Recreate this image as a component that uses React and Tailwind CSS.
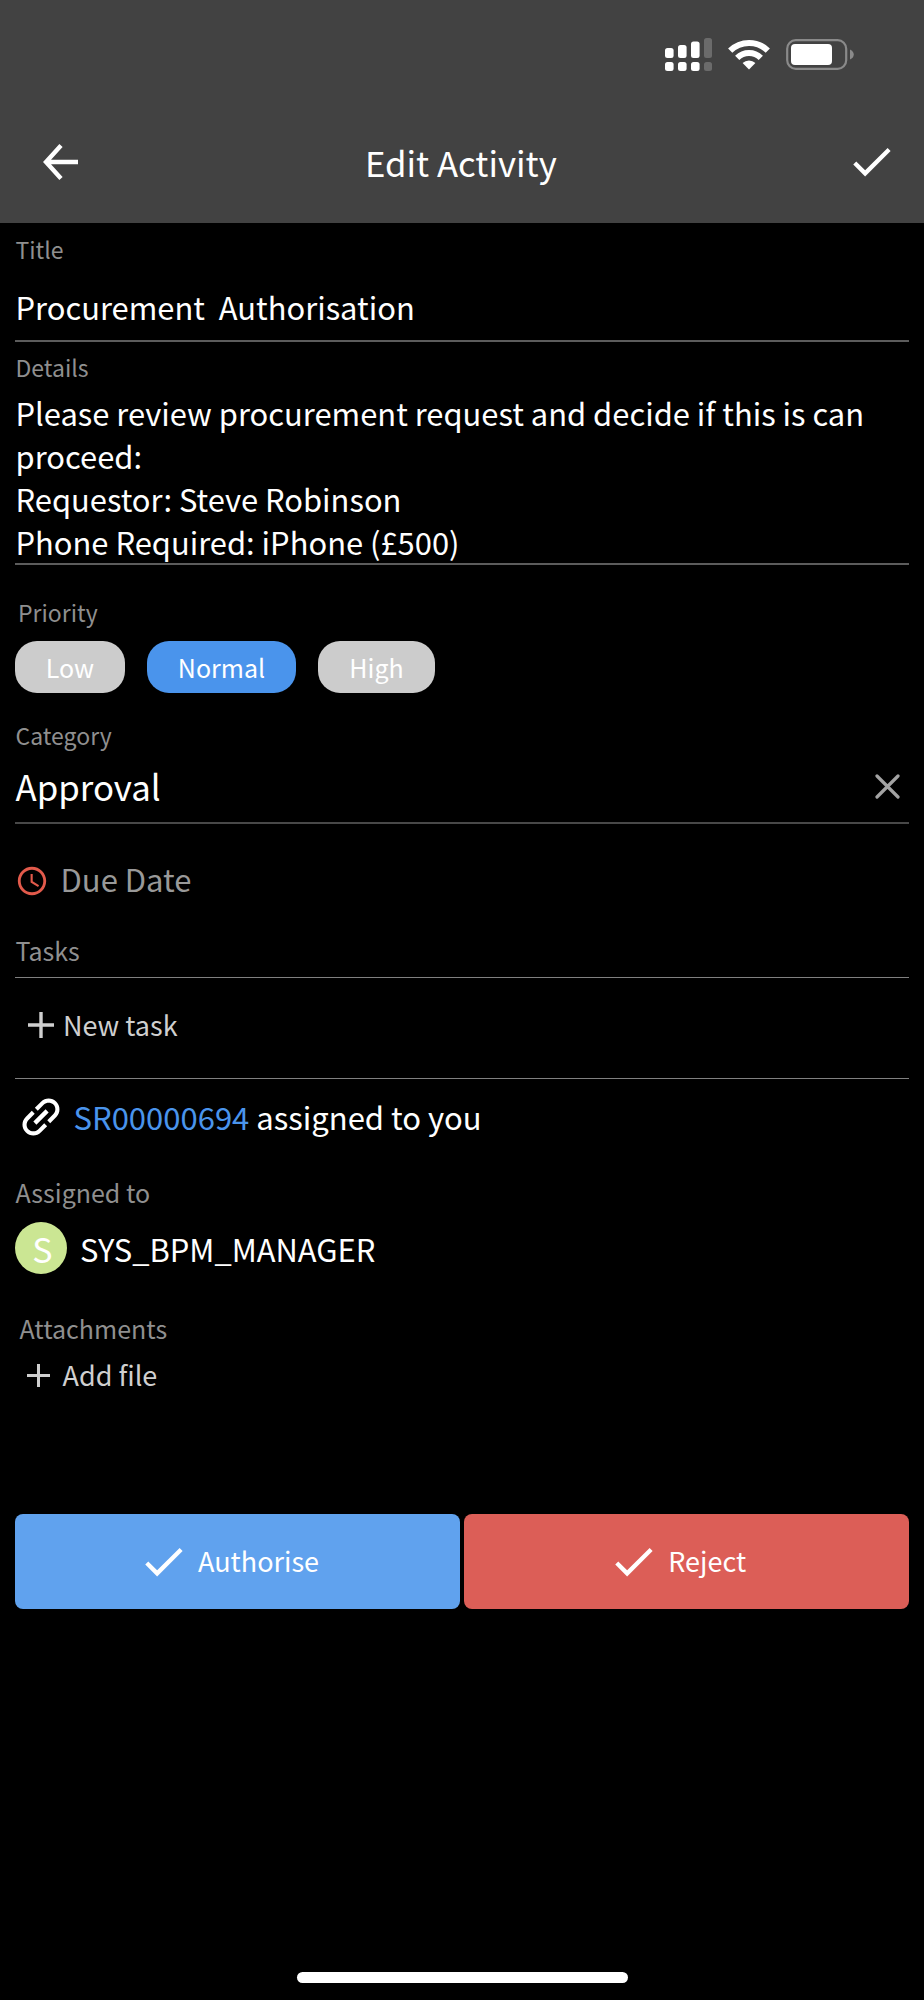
import React from 'react';
import { MdAccessTime, MdCheck, MdLink } from 'react-icons/md';

const priorities = [
  { name: 'Low', style: 'w-[110px] bg-[#cccccc]' },
  { name: 'Normal', style: 'w-[149px] bg-[#4a94ec]' },
  { name: 'High', style: 'w-[117px] bg-[#cccccc]' },
];

const StatusBar = () => {
  return (
    <div className='flex h-[109px] items-center justify-end pr-[70px]'>
      <svg width='47' height='33' viewBox='0 0 47 33' className='mr-4' fill='#fff'>
        <rect x='0' y='10' width='8.6' height='10' rx='2.5' />
        <rect x='13' y='7' width='8.6' height='13' rx='2.5' />
        <rect x='26' y='3.6' width='8.6' height='16.4' rx='2.5' />
        <rect x='39' y='0' width='8' height='20' rx='2.5' fill='#6b6b6b' />
        <rect x='0' y='24' width='8.6' height='9' rx='2.5' />
        <rect x='13' y='24' width='8.6' height='9' rx='2.5' />
        <rect x='26' y='24' width='8.6' height='9' rx='2.5' />
        <rect x='39' y='24' width='8' height='9' rx='2.5' fill='#6b6b6b' />
      </svg>
      <svg width='42' height='31' viewBox='0 0 42 31' className='mr-4' fill='none' stroke='#fff' strokeWidth='6'>
        <path d='M2.2 11.6a26.8 26.8 0 0 1 37.6 0' />
        <path d='M9.2 18.8a16.8 16.8 0 0 1 23.6 0' />
        <path d='M21 30.4l-6.4-6.4a9.2 9.2 0 0 1 12.8 0z' fill='#fff' stroke='none' />
      </svg>
      <svg width='68' height='31' viewBox='0 0 68 31'>
        <rect x='1.2' y='1.2' width='59' height='28.6' rx='8.5' fill='none' stroke='#8a8a8a' strokeWidth='2.2' />
        <rect x='5' y='5' width='41' height='21' rx='4' fill='#fff' />
        <path d='M64 10.5c5 2 5 8 0 10z' fill='#8a8a8a' />
      </svg>
    </div>
  );
};

const Plus = ({ size }) => (
  <svg width={size} height={size} viewBox='0 0 26 26' fill='none' stroke='#cfcfcf' strokeWidth='3.4'>
    <path d='M13 0v26M0 13h26' />
  </svg>
);

const Label = ({ children, className }) => (
  <p className={`h-[30px] leading-[30px] text-[#8f8f8f] ${className}`}>{children}</p>
);

const ActionButton = ({ text, className }) => (
  <button className={`flex h-[95px] items-center rounded-lg text-[27px] text-white ${className}`}>
    <MdCheck size={51} className='mr-[9px]' />
    {text}
  </button>
);

const App = () => {
  return (
    <div className="flex h-[2000px] w-[924px] flex-col overflow-hidden bg-black font-['Noto_Sans_CJK_SC','Noto_Sans',sans-serif] text-white">
      <header className='h-[223px] bg-[#424242]'>
        <StatusBar />
        <div className='flex h-[105px] items-center pl-[43px] pr-[27px]'>
          <svg width='36' height='36' viewBox='0 0 36 36' fill='none' stroke='#fff' strokeWidth='4.4'>
            <path d='M18 1.5L3 18 18 34.5M3 18H35' />
          </svg>
          <h1 className='ml-[286px] text-[34.7px] leading-10'>Edit Activity</h1>
          <MdCheck size={51} className='ml-auto' />
        </div>
      </header>

      <main className='flex flex-1 flex-col px-[15px]'>
        <Label className='mt-[11px] pl-[0.5px] text-[23px]'>Title</Label>
        <p className='mt-[21px] h-[57px] whitespace-pre border-b-2 border-[#5c5c5c] pl-[0.5px] text-[30.9px] leading-[43px]'>Procurement  Authorisation</p>

        <Label className='mt-[10px] pl-[0.5px] text-[23px]'>Details</Label>
        <div className='mt-[9px] h-[174px] whitespace-nowrap border-b-2 border-[#5c5c5c] pl-[0.5px] text-[30.9px] leading-[43.1px]'>
          <p>Please review procurement request and decide if this is can</p>
          <p>proceed:</p>
          <p>Requestor: Steve Robinson</p>
          <p>Phone Required: iPhone (£500)</p>
        </div>

        <Label className='mt-8 pl-[3px] text-[23px]'>Priority</Label>
        <div className='mt-[14px] flex gap-[22px]'>
          {priorities.map((item) => (
            <button key={item.name} className={`h-[52px] rounded-[22px] text-[25px] leading-[53px] ${item.style}`}>
              {item.name}
            </button>
          ))}
        </div>

        <Label className='mt-[27px] pl-[0.5px] text-[23px]'>Category</Label>
        <div className='mt-3 flex h-[62px] items-start justify-between border-b-2 border-[#484848] pr-[9px]'>
          <span className='pl-[0.5px] text-[34.8px] leading-[48px]'>Approval</span>
          <svg width='25' height='25' viewBox='0 0 25 25' className='mt-3' stroke='#a3a3a3' strokeWidth='3.2' strokeLinecap='round'>
            <path d='M2 2l21 21M23 2L2 23' />
          </svg>
        </div>

        <div className='mt-[33px] flex h-[43px] items-center text-[31px] leading-[43px] text-[#999999]'>
          <MdAccessTime size={34} className='mt-[5px] mr-[11.5px] text-[#e25a4b]' />
          Due Date
        </div>

        <Label className='mt-[35px] pl-[0.5px] text-[25px]'>Tasks</Label>
        <hr className='mt-3 border-[#808080]' />
        <div className='mt-[29px] flex h-9 items-center gap-[9px] pl-[13px] text-[27px] leading-9 text-[#cfcfcf]'>
          <Plus size={26} />
          New task
        </div>
        <hr className='mt-[35px] border-[#808080]' />

        <div className='mt-4 flex h-[43px] items-center text-[31px] leading-[43px]'>
          <MdLink size={52} className='mr-[6.5px] -rotate-45' />
          <p><span className='text-[#4a94ec]'>SR00000694</span> assigned to you</p>
        </div>

        <Label className='mt-[39px] pl-[0.5px] text-[25px]'>Assigned to</Label>
        <div className='mt-[15px] flex h-[52px] items-center gap-[13px]'>
          <div className='flex size-[52px] items-center justify-center rounded-full bg-[#cbe693] pl-[3px] text-[34px]'>S</div>
          <span className='text-[30.9px] leading-[43px]'>SYS_BPM_MANAGER</span>
        </div>

        <Label className='mt-[39px] pl-[4.5px] text-[25px]'>Attachments</Label>
        <div className='mt-[14px] flex h-9 items-center gap-[12.5px] pl-3 text-[27px] leading-9 text-[#cfcfcf]'>
          <Plus size={23} />
          Add file
        </div>

        <div className='mt-[121px] grid grid-cols-2 gap-[4.5px]'>
          <ActionButton text='Authorise' className='bg-[#60a2ee] pl-[123px]' />
          <ActionButton text='Reject' className='bg-[#dc5e57] pl-[144px]' />
        </div>
      </main>

      <div className='mb-[17px] ml-[297px] h-[11px] w-[331px] rounded-full bg-white' />
    </div>
  );
};

export default App;
